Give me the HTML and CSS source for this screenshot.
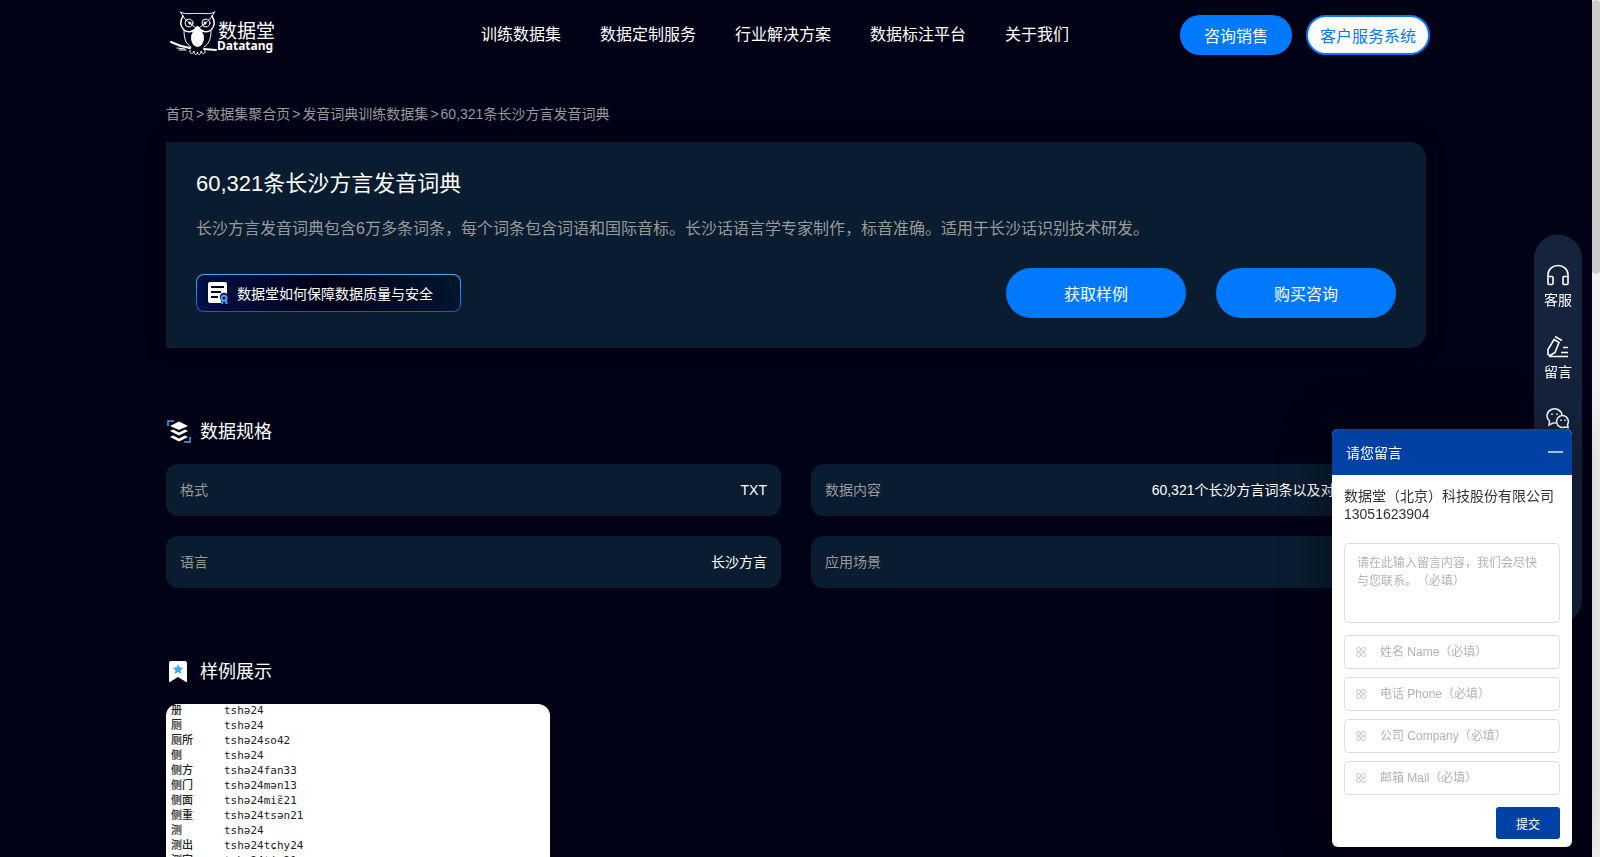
FILE: index.html
```html
<!DOCTYPE html>
<html lang="zh-CN">
<head>
  <meta charset="UTF-8">
  <title>60,321条长沙方言发音词典 - 数据堂</title>
  <link rel="stylesheet" href="styles.css">
</head>
<body>
  <div class="page">
    <header class="header">
      <a class="logo" href="#" aria-label="数据堂 Datatang">
        <svg viewBox="0 0 106 48" width="106" height="48">
          <g fill="none" stroke="#fff" stroke-linecap="round" stroke-linejoin="round">
            <path d="M10 1c6 3 12 1 17.500 1.500C33 2 39 4 45 1M11 2c3 6 9 11 16.500 16C35 13 41 8 44 2"/>
            <path stroke-width="1.500" d="M13 5c-3 5-3 10 1 14 4 3 10 2 13-3M42 5c3 5 3 10-1 14-4 3-10 2-13-3"/>
            <path d="M14 20c0 8 2 13 7 16M41 20c0 8-2 13-7 16"/>
            <circle cx="19" cy="12" r="4"/>
            <circle cx="36" cy="12" r="4"/>
            <path d="M20 39c-1 4 3 5 4 1 0 4 3 5 3.500 1 .5 4 3.500 3 3.500-1 1 4 5 3 4-1M7 37l8 1M9 39h7"/>
            <path stroke-width="2" d="M1 31c6 3 12 5 19 6M34 38l12 1"/>
          </g>
          <g fill="#fff">
            <circle cx="20" cy="12" r="1.500"/>
            <circle cx="35" cy="12" r="1.500"/>
            <ellipse cx="27.500" cy="27" rx="6.500" ry="9"/>
            <path d="M27.500 15l2 3-2 4-2-4z"/>
            <text class="logo-cn" x="48" y="27">数据堂</text>
            <text class="logo-en" x="47" y="39">Datatang</text>
          </g>
        </svg>
      </a>
      <nav class="nav">
        <a href="#">训练数据集</a>
        <a href="#">数据定制服务</a>
        <a href="#">行业解决方案</a>
        <a href="#">数据标注平台</a>
        <a href="#">关于我们</a>
      </nav>
      <div class="header-actions">
        <button class="btn btn-sales" type="button">咨询销售</button>
        <button class="btn btn-service" type="button">客户服务系统</button>
      </div>
    </header>

    <main class="container">
      <div class="breadcrumb">
        <a href="#">首页</a><span>&gt;</span><a href="#">数据集聚合页</a><span>&gt;</span><a href="#">发音词典训练数据集</a><span>&gt;</span><a href="#">60,321条长沙方言发音词典</a>
      </div>

      <section class="intro">
        <h1>60,321条长沙方言发音词典</h1>
        <p>长沙方言发音词典包含6万多条词条，每个词条包含词语和国际音标。长沙话语言学专家制作，标音准确。适用于长沙话识别技术研发。</p>
        <div class="intro-actions">
          <a class="quality" href="#">
            <svg viewBox="0 0 20 22" width="20" height="22">
              <path fill="#fff" d="M2 0h15q2 0 2 2v10a4 4 0 0 0-6 6v3H2q-2 0-2-2V2q0-2 2-2z"/>
              <path stroke="#020418" stroke-width="2" d="M3 5h13M3 10h10M3 15h7"/>
              <circle cx="16" cy="16" r="2.500" fill="none" stroke="#41a5f5" stroke-width="2"/>
              <path stroke="#41a5f5" stroke-width="2" d="M15 18l-1 4M17 18l2 4"/>
            </svg>
            数据堂如何保障数据质量与安全
          </a>
          <button class="btn btn-large" type="button">获取样例</button>
          <button class="btn btn-large" type="button">购买咨询</button>
        </div>
      </section>

      <section class="section">
        <h2>
          <svg viewBox="0 0 24 24" width="24" height="24">
            <path fill="none" stroke="#41a5f5" stroke-width="1.500" d="M1 6V1h6M23 17v5h-6"/>
            <g fill="#fff">
              <path d="M12 1.500l9 4.500-9 4-9-4z"/>
              <path d="M3 11l3-1.500 6 3 6-3 3 1.500-9 4.500z"/>
              <path d="M3 17l3-1.500 6 3 6-3 3 1.500-9 4.500z"/>
            </g>
          </svg>
          数据规格
        </h2>
        <dl class="specs">
          <div><dt>格式</dt><dd>TXT</dd></div>
          <div><dt>数据内容</dt><dd>60,321个长沙方言词条以及对应的IPA音标</dd></div>
          <div><dt>语言</dt><dd>长沙方言</dd></div>
          <div><dt>应用场景</dt><dd>语音识别</dd></div>
        </dl>
      </section>

      <section class="section">
        <h2>
          <svg viewBox="0 0 24 24" width="24" height="24">
            <path fill="#fff" d="M4 1h14q2 0 2 2v19l-1 0-8-5-8 5-1 0V3q0-2 2-2z"/>
            <path fill="#41a5f5" d="M11 4l1.600 3.400 3.600.4-2.700 2.500.8 3.700-3.300-1.900-3.300 1.900.8-3.700-2.700-2.500 3.600-.4z"/>
          </svg>
          样例展示
        </h2>
        <div class="sample">
          <table>
            <tr><td>册</td><td>tshə24</td></tr>
            <tr><td>厕</td><td>tshə24</td></tr>
            <tr><td>厕所</td><td>tshə24so42</td></tr>
            <tr><td>侧</td><td>tshə24</td></tr>
            <tr><td>侧方</td><td>tshə24fan33</td></tr>
            <tr><td>侧门</td><td>tshə24mən13</td></tr>
            <tr><td>侧面</td><td>tshə24miɛ̃21</td></tr>
            <tr><td>侧重</td><td>tshə24tsən21</td></tr>
            <tr><td>测</td><td>tshə24</td></tr>
            <tr><td>测出</td><td>tshə24tɕhy24</td></tr>
            <tr><td>测定</td><td>tshə24tin21</td></tr>
          </table>
        </div>
      </section>
    </main>
  </div>
  <div class="scrollbar"><div class="thumb"></div></div>

  <aside class="toolbar">
    <a href="#">
      <svg viewBox="0 0 24 24" width="24" height="24">
        <path d="M2 20v-9a10 9 0 0 1 20 0v9q0 1-1 1h-3q-1 0-1-1v-6q0-1 1-1h4M2 13h4q1 0 1 1v6q0 1-1 1H3q-1 0-1-1"/>
      </svg>
      客服
    </a>
    <a href="#">
      <svg viewBox="0 0 24 24" width="24" height="24">
        <path d="M9 1l7 4M8 4l5 3-4 10-5 3-2-1v-5zM17 12h5M15 17h7M3 21h19"/>
      </svg>
      留言
    </a>
    <a href="#">
      <svg viewBox="0 0 24 24" width="24" height="24">
        <path d="M10.500 15.500H7l-4 2 .5-4A7.500 7 0 1 1 16 8M17 8a6 6 0 1 0 2 11.500l3 .5-.5-3A6 6 0 0 0 17 8z"/>
        <path d="M6 6v1.500M11 6v1.500M15 12v1.500M19 12v1.500"/>
      </svg>
      微信
    </a>
  </aside>

  <form class="message">
    <div class="message-head">
      请您留言
      <button type="button" aria-label="最小化"></button>
    </div>
    <div class="message-body">
      <p>数据堂（北京）科技股份有限公司<br>13051623904</p>
      <textarea aria-label="留言内容" placeholder="请在此输入留言内容，我们会尽快与您联系。（必填）"></textarea>
      <label class="field">
        <svg viewBox="0 0 12 12" width="12" height="12"><use href="#clover"/></svg>
        <input type="text" aria-label="姓名" placeholder="姓名 Name（必填）">
      </label>
      <label class="field">
        <svg viewBox="0 0 12 12" width="12" height="12"><use href="#clover"/></svg>
        <input type="tel" aria-label="电话" placeholder="电话 Phone（必填）">
      </label>
      <label class="field">
        <svg viewBox="0 0 12 12" width="12" height="12"><use href="#clover"/></svg>
        <input type="text" aria-label="公司" placeholder="公司 Company（必填）">
      </label>
      <label class="field">
        <svg viewBox="0 0 12 12" width="12" height="12"><use href="#clover"/></svg>
        <input type="email" aria-label="邮箱" placeholder="邮箱 Mail（必填）">
      </label>
      <button class="submit" type="submit">提交</button>
    </div>
  </form>

  <svg class="symbols" width="0" height="0">
    <symbol id="clover" viewBox="0 0 12 12">
      <g fill="none" stroke="#c3c5cc">
        <rect x="1.500" y="1.500" width="4" height="4" rx="1.800"/>
        <rect x="6.500" y="1.500" width="4" height="4" rx="1.800"/>
        <rect x="1.500" y="6.500" width="4" height="4" rx="1.800"/>
        <rect x="6.500" y="6.500" width="4" height="4" rx="1.800"/>
      </g>
    </symbol>
  </svg>
</body>
</html>
```
FILE: styles.css
```css
* {
  box-sizing: border-box;
}
body {
  display: flex;
  height: 100vh;
  margin: 0;
  background: #020216;
  color: #fff;
  font-family: "Liberation Sans", "Noto Sans CJK SC", sans-serif;
  font-size: 14px;
  text-spacing-trim: space-all;
}
a {
  color: inherit;
  text-decoration: none;
}
button, input, textarea {
  font-family: inherit;
}

/* scrolling area */
.page {
  flex: 1;
  overflow-y: auto;
  scrollbar-width: none;
}
.scrollbar {
  width: 8px;
  background: #f1f1f1;
}
.thumb {
  height: 32%;
  border-radius: 4px;
  background: #ccc;
}

/* header */
.header {
  display: flex;
  align-items: center;
  max-width: 1268px;
  height: 70px;
  margin: 0 auto;
  padding-left: 8px;
}
.logo svg {
  display: block;
}
.logo-cn {
  font-size: 19px;
}
.logo-en {
  font-family: "Noto Sans", sans-serif;
  font-size: 12px;
  font-weight: bold;
}
.nav {
  display: flex;
  gap: 39px;
  margin-left: 205px;
  padding-bottom: 4px;
  font-size: 16px;
}
.header-actions {
  display: flex;
  gap: 14px;
  margin-left: auto;
}
.btn {
  height: 40px;
  padding: 0;
  border: none;
  border-radius: 25px;
  background: #0079fe;
  color: #fff;
  font-size: 16px;
  cursor: pointer;
}
.btn-sales {
  width: 112px;
}
.btn-service {
  width: 124px;
  border: 2px solid #0079fe;
  background: #fff;
  color: #0079fe;
}
.btn-large {
  width: 180px;
  height: 50px;
}

.container {
  max-width: 1260px;
  min-height: 2593px;
  margin: 0 auto;
}
.breadcrumb {
  display: flex;
  padding: 34px 0 18px;
  color: #999;
  line-height: 20px;
}
.breadcrumb span {
  padding: 0 2px;
}

/* intro card */
.intro {
  padding: 26px 30px 30px;
  border-radius: 0 16px 16px 0;
  background: #0a1c30;
  box-shadow: 0 0 20px rgba(0, 0, 0, 0.3);
}
.intro h1 {
  margin: 0;
  font-size: 22px;
  font-weight: normal;
  line-height: 32px;
}
.intro p {
  margin: 16px 0 26px;
  color: #999;
  font-size: 16px;
  line-height: 26px;
}
.intro-actions {
  display: flex;
  align-items: center;
  gap: 30px;
}
.quality {
  display: flex;
  align-items: center;
  gap: 9px;
  width: 265px;
  height: 38px;
  margin-right: auto;
  padding: 0 11px;
  border: 1px solid transparent;
  border-radius: 8px;
  background:
    linear-gradient(90deg, #001046, #020216 50%, #00162e) padding-box,
    linear-gradient(#4aaaf8, #1458d8) border-box;
}

/* sections */
.section h2 {
  display: flex;
  align-items: center;
  gap: 9px;
  margin: 0;
  padding: 71px 0 19px 1px;
  font-size: 18px;
  font-weight: normal;
  line-height: 26px;
}
.specs {
  display: grid;
  grid-template-columns: 1fr 1fr;
  gap: 20px 30px;
  margin: 0;
}
.specs div {
  display: flex;
  justify-content: space-between;
  padding: 0 14px;
  border-radius: 12px;
  background: #0a1c30;
  line-height: 52px;
}
.specs dt {
  color: #999;
}
.specs dd {
  margin: 0;
}
.sample {
  width: 384px;
  height: 240px;
  overflow: hidden;
  border-radius: 12px;
  background: #fff;
}
.sample table {
  margin: -1px 0 0 5px;
  border-collapse: collapse;
  color: #222;
  font-family: "DejaVu Sans Mono", "Noto Sans CJK SC", monospace;
  font-size: 11px;
  line-height: 15px;
}
.sample td {
  height: 15px;
  padding: 0;
}
.sample td:first-child {
  width: 53px;
  font-weight: 500;
}

/* floating toolbar */
.toolbar {
  position: fixed;
  top: 50%;
  right: 18px;
  display: flex;
  flex-direction: column;
  gap: 26px;
  width: 48px;
  height: 389px;
  padding-top: 29px;
  border-radius: 24px;
  background: #15233d;
  transform: translateY(-50%);
}
.toolbar a {
  display: flex;
  flex-direction: column;
  align-items: center;
  gap: 2px;
  line-height: 20px;
}
.toolbar svg {
  fill: none;
  stroke: #fff;
  stroke-width: 1.6;
}

/* message window */
.message {
  position: fixed;
  right: 28px;
  bottom: 10px;
  width: 240px;
  overflow: hidden;
  border-radius: 6px;
  background: #fff;
  box-shadow: 0 0 50px rgba(0, 0, 0, 0.4);
}
.message-head {
  display: flex;
  align-items: center;
  justify-content: space-between;
  height: 46px;
  padding: 0 9px 0 14px;
  background: #0042a4;
}
.message-head button {
  width: 15px;
  height: 2px;
  padding: 0;
  border: none;
  background: #a9bfe0;
}
.message-body {
  display: flex;
  flex-direction: column;
  gap: 8px;
  padding: 12px 12px 8px;
}
.message-body p {
  margin: 0 0 12px;
  color: #333;
  line-height: 18px;
}
.message textarea {
  height: 80px;
  margin-bottom: 4px;
  padding: 10px 12px;
  border: 1px solid #dcdde6;
  border-radius: 4px;
  font-size: 12px;
  line-height: 18px;
  resize: none;
}
.field {
  display: flex;
  align-items: center;
  gap: 13px;
  height: 34px;
  padding: 0 10px;
  border: 1px solid #dcdde6;
  border-radius: 4px;
}
.field svg {
  flex: none;
}
.field input {
  width: 100%;
  padding: 0;
  border: none;
  outline: none;
  font-size: 12px;
}
.message ::placeholder {
  color: #b0b2b8;
}
.submit {
  align-self: flex-end;
  width: 64px;
  height: 32px;
  margin-top: 4px;
  border: none;
  border-radius: 3px;
  background: #0042a4;
  color: #fff;
  font-size: 12px;
}
.symbols {
  position: absolute;
}
```
